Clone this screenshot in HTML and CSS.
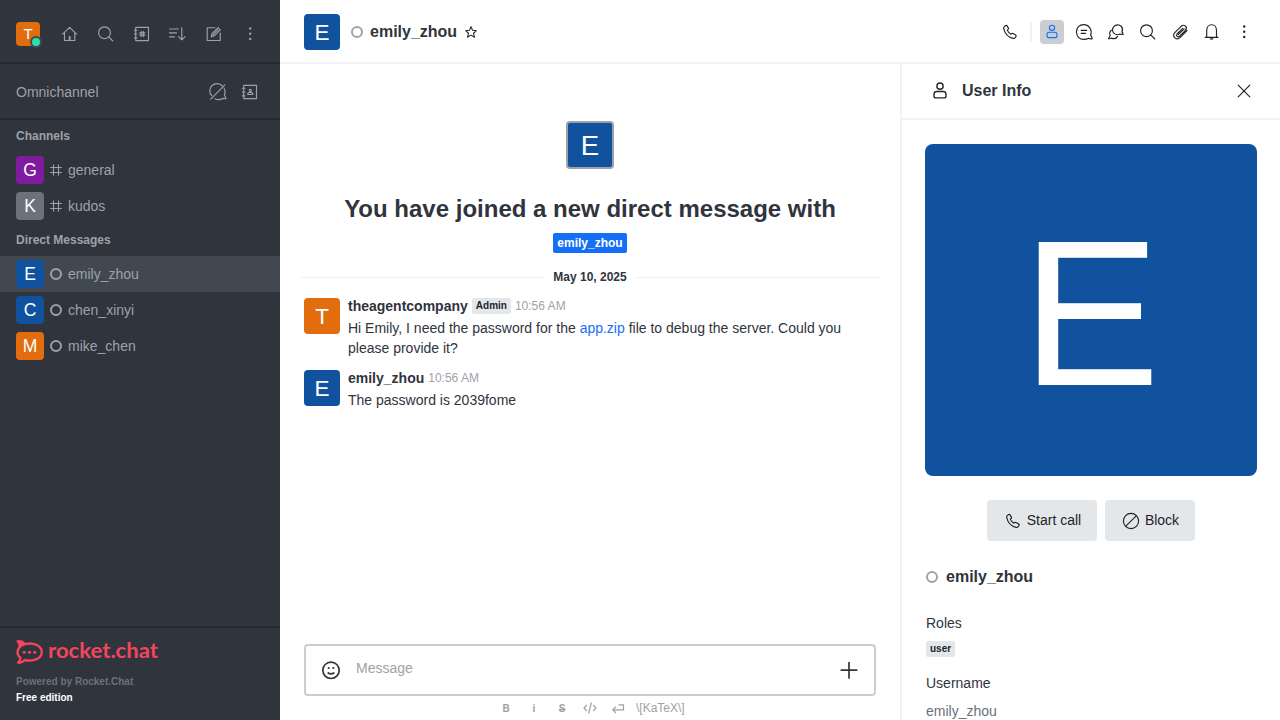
FILE: index.html
```html
<!DOCTYPE html>
<html lang="en">
<head>
<meta charset="utf-8">
<title>emily_zhou</title>
<link rel="stylesheet" href="styles.css">
</head>
<body>
<svg class="defs" aria-hidden="true">
  <symbol id="search" viewBox="0 0 20 20"><circle cx="8.500" cy="8.700" r="5.900"/><path d="M12.700 12.900l4.100 4.100"/></symbol>
  <symbol id="kebab" viewBox="0 0 20 20"><g class="fill"><circle cx="10.200" cy="4.500" r="1.200"/><circle cx="10.200" cy="9.800" r="1.200"/><circle cx="10.200" cy="15" r="1.200"/></g></symbol>
  <symbol id="phone" viewBox="0 0 20 20"><path d="M4.300 4.600l1.500-1c.5-.3 1-.2 1.300.3l1.300 2.200c.3.5.1 1-.3 1.300l-.8.7c.7 1.700 2 3.100 3.600 4.100l.9-.6c.5-.3.9-.3 1.300 0l2.600 1.500c.5.3.6.8.3 1.300l-.9 1.400c-.4.6-1 .8-1.700.6C8.300 15.200 4.700 11.500 3.700 6.300c-.1-.7.1-1.300.6-1.700z"/></symbol>
  <symbol id="user" viewBox="0 0 20 20"><circle cx="10" cy="6.800" r="2.600"/><path d="M7.200 11.200h5.600c1.400 0 2.200 1.100 2.200 2.400v1.300c0 1.100-.5 1.700-1.500 1.700h-7c-1 0-1.500-.6-1.500-1.700v-1.300c0-1.300.8-2.400 2.200-2.400z"/></symbol>
  <symbol id="hash" viewBox="0 0 12 12"><path d="M3.500.7v10.600M8.500.7v10.600M.6 3.500h10.800M.6 8.500h10.800"/></symbol>
</svg>
<div class="app">
  <nav class="sidebar">
    <div class="toolbar">
      <div class="me">
        <svg class="avatar a24" viewBox="0 0 200 200"><rect class="orange" width="200" height="200"/><text x="100" y="145">T</text></svg>
        <span class="online"></span>
      </div>
      <div class="tools">
        <svg class="icon" viewBox="0 0 20 20"><path d="M2.600 10.200L9.600 3.400l7 6.800M4.500 9v7.500h10.300V9"/><path class="fill" d="M8.700 16.500v-4.300h1.900v4.300z"/></svg>
        <svg class="icon"><use href="#search"/></svg>
        <svg class="icon" viewBox="0 0 20 20"><path d="M3.700 3.400h12.800v13.200H3.700zM2.300 6.200H5M2.300 10H5M2.300 13.800H5M9.200 7.400v5.200M11.400 7.400v5.200M7.700 8.900h5.200M7.700 11.100h5.200"/></svg>
        <svg class="icon" viewBox="0 0 20 20"><path d="M1.500 5h8.800M1.500 8.900h7M1.500 12.800h5M13.800 3.800v12M10.500 12.700l3.300 3.200 3.300-3.200"/></svg>
        <svg class="icon" viewBox="0 0 20 20"><path d="M11 3.700H3.200v12.800h13V9M7.300 12.600l.7-2.900 6.100-6.100 2.200 2.200-6.100 6.100zM12.600 5.100l2.200 2.200M9.200 10.600l3.400-3.400"/></svg>
        <svg class="icon"><use href="#kebab"/></svg>
      </div>
    </div>
    <div class="omni">
      <span>Omnichannel</span>
      <div class="omni-icons">
        <svg class="icon" viewBox="0 0 20 20"><path d="M3.700 13.700A7.200 7.200 0 0 1 14.300 3.900M16 6.200c1.300 2 1.200 4.900.4 7.100l1.700 3.300c-1.300.3-2.400.2-3.300-.2-2.500 1.500-5.700 1.400-7.800.3M2.700 17.200L16.900 2.800"/></svg>
        <svg class="icon" viewBox="0 0 20 20"><path d="M3.700 3.400h12.800v13.200H3.700zM2.300 6.200H5M2.300 10H5M2.300 13.800H5"/><circle cx="10.300" cy="8.400" r="1.100"/><path d="M7.800 12.500v-1l1.400-1h2.200l1.400 1v1z"/></svg>
      </div>
    </div>
    <div class="group">Channels</div>
    <div class="room"><svg class="avatar a28" viewBox="0 0 200 200"><rect class="purple" width="200" height="200"/><text x="100" y="145">G</text></svg><svg class="icon small"><use href="#hash"/></svg><span>general</span></div>
    <div class="room"><svg class="avatar a28" viewBox="0 0 200 200"><rect class="gray" width="200" height="200"/><text x="100" y="145">K</text></svg><svg class="icon small"><use href="#hash"/></svg><span>kudos</span></div>
    <div class="group">Direct Messages</div>
    <div class="room active"><svg class="avatar a28" viewBox="0 0 200 200"><rect class="blue" width="200" height="200"/><text x="100" y="145">E</text></svg><i class="status"></i><span>emily_zhou</span></div>
    <div class="room"><svg class="avatar a28" viewBox="0 0 200 200"><rect class="blue" width="200" height="200"/><text x="100" y="145">C</text></svg><i class="status"></i><span>chen_xinyi</span></div>
    <div class="room"><svg class="avatar a28" viewBox="0 0 200 200"><rect class="orange" width="200" height="200"/><text x="100" y="145">M</text></svg><i class="status"></i><span>mike_chen</span></div>
    <footer class="brand">
      <svg class="logo" viewBox="0 0 144 24">
        <path d="M0 .7C3.500-.6 7.200.2 9.600 3L3 8.200C2.800 5.500 2 3 0 .7z"/>
        <path class="bubble" d="M14 3.500C7 3.500 1.500 7 1.500 12.200c0 2.300 1.100 4.200 2.900 5.500.1 1.900-.7 3.600-2.300 5 2.600.3 5-.7 6.800-2.700C17.500 21.800 25.800 18.600 25.800 12 25.800 7 20.500 3.500 14 3.500z"/>
        <circle cx="8.200" cy="12.300" r="1.550"/><circle cx="13.500" cy="12.300" r="1.550"/><circle cx="18.700" cy="12.300" r="1.550"/>
        <text x="32" y="18" textLength="110" lengthAdjust="spacingAndGlyphs">rocket.chat</text>
      </svg>
      <div class="powered">Powered by Rocket.Chat</div>
      <div class="edition">Free edition</div>
    </footer>
  </nav>
  <main class="main">
    <header class="header">
      <svg class="avatar a36" viewBox="0 0 200 200"><rect class="blue" width="200" height="200"/><text x="100" y="145">E</text></svg>
      <i class="status"></i>
      <h1>emily_zhou</h1>
      <svg class="icon star" viewBox="0 0 20 20"><path d="M10 2.300l2.200 5.300 5.600.5-4.200 3.700 1.300 5.600-4.900-3-4.900 3 1.300-5.600-4.200-3.700 5.600-.5z"/></svg>
      <div class="actions">
        <svg class="icon"><use href="#phone"/></svg>
        <span class="sep"></span>
        <span class="pressed"><svg class="icon"><use href="#user"/></svg></span>
        <svg class="icon" viewBox="0 0 20 20"><path d="M16.600 13.200c.8-2.100.8-4.700-.4-6.700C14.800 3.900 12.600 2.600 9.700 2.600 5.400 2.600 2.500 5.700 2.500 10s3 7.400 7.200 7.400c2.100 0 3.600-.4 4.800-1.100 1.100.6 2.400.7 3.700.4-.2-1.100-.7-2.300-1.600-3.500zM7.200 8.400h5.400M7.200 11.400h4.300"/></svg>
        <svg class="icon" viewBox="0 0 20 20"><path d="M15.900 10c1-2 .8-4-.5-5.500a5.300 5.300 0 0 0-7.600.1C6 6.500 6.100 9.700 8 11.400c1.600 1.400 4 1.600 5.900.7 1.100.5 2.200.6 3.300.2-.2-.8-.6-1.500-1.300-2.300zM5.300 8.200c-1.600 1.400-1.900 3.500-1.100 5.200l-1.700 3.300c1.400.1 2.400-.1 3.200-.6 2.500 1.100 4.800.2 5.900-1.700"/></svg>
        <svg class="icon"><use href="#search"/></svg>
        <svg class="icon" viewBox="0 0 20 20"><path d="M17 8.700L10.300 15.400c-3.900 3.700-8.700-.8-5.500-4.800l6.300-6.300c3.100-2.700 7.100 1 4.300 4.200l-5.900 5.800c-1.700 1.400-3.900-.5-2.500-2.300l5.700-5.700M8.300 12.700l5.900-5.900"/></svg>
        <svg class="icon" viewBox="0 0 20 20"><path d="M3.200 15.400h12.800M4.700 15.200V8.400c0-3.300 2-5.700 4.900-5.700s4.900 2.400 4.900 5.700v6.800M8.400 16.900h2.400"/></svg>
        <svg class="icon"><use href="#kebab"/></svg>
      </div>
    </header>
    <div class="content">
      <section class="chat">
        <div class="intro">
          <div class="frame"><svg class="avatar a44" viewBox="0 0 200 200"><rect class="blue" width="200" height="200"/><text x="100" y="145">E</text></svg></div>
          <h2>You have joined a new direct message with</h2>
          <span class="mention">emily_zhou</span>
        </div>
        <div class="day"><span>May 10, 2025</span></div>
        <article class="message">
          <svg class="avatar a36" viewBox="0 0 200 200"><rect class="orange" width="200" height="200"/><text x="100" y="145">T</text></svg>
          <div class="body">
            <div class="meta"><b>theagentcompany</b><span class="tag">Admin</span><time>10:56 AM</time></div>
            <p>Hi Emily, I need the password for the <a>app.zip</a> file to debug the server. Could you please provide it?</p>
          </div>
        </article>
        <article class="message">
          <svg class="avatar a36" viewBox="0 0 200 200"><rect class="blue" width="200" height="200"/><text x="100" y="145">E</text></svg>
          <div class="body">
            <div class="meta"><b>emily_zhou</b><time>10:56 AM</time></div>
            <p>The password is 2039fome</p>
          </div>
        </article>
        <div class="composer">
          <svg class="emoji" viewBox="0 0 20 20"><circle cx="10" cy="10.300" r="8.200"/><path d="M7.200 13c1.400 1.200 4.200 1.200 5.600 0"/><g class="fill"><circle cx="7.700" cy="8" r="1.100"/><circle cx="12.300" cy="8" r="1.100"/></g></svg>
          <span>Message</span>
          <svg class="plus" viewBox="0 0 20 20"><path d="M10 2.500v15.400M2.300 10.200h15.400"/></svg>
        </div>
        <div class="format">
          <b>B</b><b>i</b><b><s>S</s></b>
          <svg viewBox="0 0 16 16"><path d="M4.800 5L2 8l2.800 3M11.200 5L14 8l-2.800 3M9.400 2.500l-2.800 11"/></svg>
          <svg viewBox="0 0 16 16"><path d="M8.500 4.800h5v5H3M6 6.600L2.800 9.800 6 13"/></svg>
          <span>\[KaTeX\]</span>
        </div>
      </section>
      <aside class="panel">
        <div class="panel-head">
          <svg class="icon large"><use href="#user"/></svg>
          <h3>User Info</h3>
          <svg class="icon close" viewBox="0 0 20 20"><path d="M4.200 4.200l11.600 11.600M15.800 4.200L4.200 15.800"/></svg>
        </div>
        <div class="panel-body">
          <svg class="avatar big" viewBox="0 0 200 200"><rect class="blue" width="200" height="200"/><text x="100" y="145">E</text></svg>
          <div class="buttons">
            <span class="button call"><svg class="icon"><use href="#phone"/></svg>Start call</span>
            <span class="button block"><svg class="icon" viewBox="0 0 20 20"><circle cx="10" cy="10" r="7.600"/><path d="M4.800 15.200L15.200 4.800"/></svg>Block</span>
          </div>
          <div class="person"><i class="status"></i><b>emily_zhou</b></div>
          <div class="label">Roles</div>
          <span class="tag role">user</span>
          <div class="label">Username</div>
          <div class="value">emily_zhou</div>
        </div>
      </aside>
    </div>
  </main>
</div>
</body>
</html>
```

FILE: styles.css
```css
* { box-sizing: border-box; }
body { margin: 0; font: 14px/20px "Liberation Sans", Arial, sans-serif; color: #2f343d; background: #fff; }
h1, h2, h3, p { margin: 0; }
svg { flex: none; display: block; }
.defs { position: absolute; width: 0; height: 0; }
.app { display: flex; width: 1280px; height: 720px; overflow: hidden; }
.icon { width: 20px; height: 20px; fill: none; stroke: currentColor; stroke-width: 1.15; stroke-linejoin: round; stroke-linecap: round; }
.fill { fill: currentColor; stroke: none; }
.avatar { border-radius: 4px; }
.avatar text { font-size: 125px; text-anchor: middle; fill: #fff; }
.a24 { width: 24px; height: 24px; }
.a28 { width: 28px; height: 28px; }
.a36 { width: 36px; height: 36px; }
.a44 { width: 44px; height: 44px; border-radius: 2px; }
.orange { fill: #e26d0e; }
.purple { fill: #7f1b9f; }
.gray { fill: #6c727a; }
.blue { fill: #10529e; }
.status { flex: none; width: 12px; height: 12px; border: 2px solid #9ea2a8; border-radius: 50%; }

.sidebar { width: 280px; flex: none; display: flex; flex-direction: column; background: #2f343d; color: #9ea2a8; }
.toolbar { height: 64px; padding: 6px 16px 0; display: flex; align-items: center; border-bottom: 2px solid #272a32; }
.me { position: relative; }
.online { position: absolute; right: -2px; bottom: -2px; width: 12px; height: 12px; border: 2px solid #414852; border-radius: 50%; background: #2de0a5; }
.tools { display: flex; gap: 16px; margin-left: 20px; }
.omni { height: 56px; padding: 2px 20px 0 16px; display: flex; align-items: center; justify-content: space-between; border-bottom: 2px solid #272a32; }
.omni-icons { display: flex; gap: 12px; }
.group { height: 32px; padding: 6px 16px; font-size: 12px; font-weight: 700; }
.room { height: 36px; padding: 0 16px; display: flex; align-items: center; }
.room.active { background: #414852; border-radius: 2px; }
.room .status, .room .small { margin: 0 6px; }
.small { width: 12px; height: 12px; stroke-width: 1.1; }
.brand { margin-top: auto; height: 94px; padding: 12px 16px 0; border-top: 2px solid #272a32; font-size: 10px; line-height: 16px; font-weight: 700; }
.logo { width: 144px; height: 24px; fill: #f5455c; margin-bottom: 10px; overflow: visible; }
.logo text { font: 700 21.5px Lato, sans-serif; }
.bubble { fill: none; stroke: #f5455c; stroke-width: 2.3; stroke-linejoin: round; }
.powered { color: #6c727a; }
.edition { color: #fff; }

.main { flex: 1; display: flex; flex-direction: column; min-width: 0; }
.header { height: 64px; padding: 2px 26px 0 24px; display: flex; align-items: center; border-bottom: 2px solid #f1f2f4; color: #1f2329; }
.header .status { margin: 0 7px 0 11px; }
.header h1 { font-size: 16px; line-height: 24px; color: #2f343d; }
.star { width: 14px; height: 14px; margin-left: 7px; stroke-width: 1.5; }
.actions { margin-left: auto; display: flex; align-items: center; gap: 12px; }
.sep { width: 2px; height: 20px; background: #f1f2f4; margin: 0 -2px; }
.pressed { width: 24px; height: 24px; margin: 0 -2px; padding: 1px 2px 3px; border-radius: 4px; background: #cbced1; color: #156ff5; }
.content { flex: 1; min-height: 0; display: flex; }
.chat { flex: 1; min-width: 0; display: flex; flex-direction: column; }
.intro { padding-top: 57px; display: flex; flex-direction: column; align-items: center; }
.frame { padding: 2px; background: #9ea2a8; border-radius: 4px; }
.intro h2 { margin-top: 24px; font-size: 24px; line-height: 32px; }
.mention { margin-top: 8px; height: 20px; padding: 0 4px; border-radius: 2px; background: #156ff5; color: #fff; font-size: 12px; font-weight: 700; }
.day { margin: 14px 20px 11px; height: 20px; display: flex; align-items: center; gap: 8px; font-size: 12px; font-weight: 700; }
.day::before, .day::after { content: ""; flex: 1; height: 1px; background: #f1f2f4; }
.message { display: flex; gap: 8px; padding: 0 24px; margin-bottom: 12px; }
.body { flex: 1; margin-top: -2px; }
.meta { display: flex; align-items: center; gap: 4px; height: 20px; }
.meta time { font-size: 12px; color: #9ea2a8; }
.tag { height: 16px; padding: 0 4px; border-radius: 2px; background: #e4e7ea; color: #1f2329; font-size: 10px; line-height: 16px; font-weight: 700; }
.message p { margin-top: 2px; padding-right: 8px; }
.message a { color: #156ff5; }
.composer { margin: auto 24px 0; height: 52px; padding: 0 15px; display: flex; align-items: center; border: 2px solid #cbced1; border-radius: 4px; color: #9ea2a8; }
.composer span { flex: 1; margin: -4px 0 0 15px; }
.emoji, .plus { width: 20px; height: 20px; fill: none; stroke: #2f343d; stroke-width: 1.7; color: #2f343d; stroke-linecap: round; }
.format { height: 24px; display: flex; align-items: center; padding-left: 218px; gap: 12px; color: #9ea2a8; }
.format b { width: 16px; padding-top: 2px; text-align: center; font-size: 10px; }
.format svg { width: 16px; height: 16px; fill: none; stroke: currentColor; stroke-width: 1.2; }
.format span { margin-left: -2px; font-size: 12px; }

.panel { width: 380px; flex: none; border-left: 2px solid #f1f2f4; }
.panel-head { height: 56px; padding: 0 26px; display: flex; align-items: center; border-bottom: 2px solid #f1f2f4; color: #1f2329; }
.panel-head h3 { margin-left: 10px; font-size: 16px; color: #2f343d; }
.large { width: 24px; height: 24px; margin-top: -2px; }
.close { margin-left: auto; }
.panel-body { padding: 24px 23px 0 24px; }
.big { width: 332px; height: 332px; border-radius: 8px; margin-left: -1px; }
.buttons { margin-top: 24px; display: flex; justify-content: center; gap: 8px; margin-left: -1px; }
.button { height: 41px; padding-bottom: 1px; display: flex; align-items: center; justify-content: center; gap: 4px; border-radius: 4px; background: #e4e7ea; color: #1f2329; }
.button .icon { margin-top: 2px; }
.call { width: 110px; }
.block { width: 90px; }
.person { margin-top: 26px; height: 20px; display: flex; align-items: center; gap: 8px; font-size: 16px; }
.label { margin-top: 26px; }
.role { display: block; width: max-content; margin-top: 8px; }
.role + .label { margin-top: 16px; }
.value { margin-top: 8px; color: #6c727a; }
```
